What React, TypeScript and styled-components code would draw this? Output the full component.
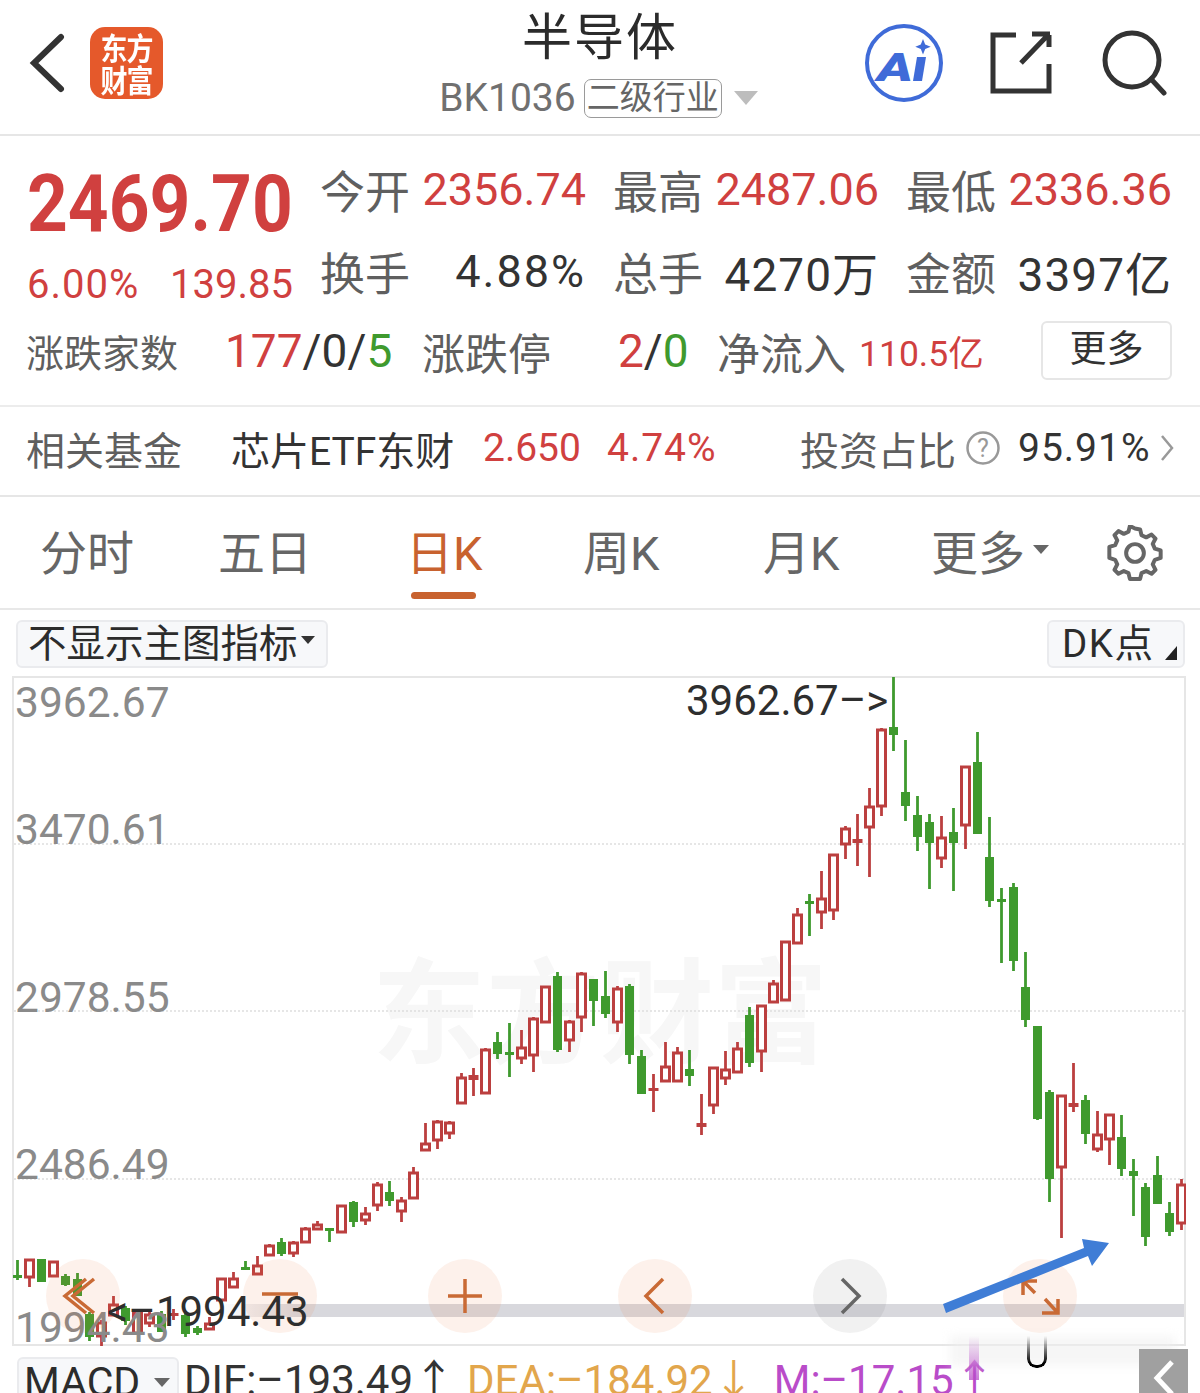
import React from "react";
import styled, { createGlobalStyle } from "styled-components";

const GlobalStyle = createGlobalStyle`
  html, body {
    margin: 0;
    padding: 0;
    background: #fff;
  }
  body {
    font-family: Roboto, "Noto Sans CJK SC", sans-serif;
    color: #333;
  }
`;

const RED = "#d0403f";
const DARK = "#333333";
const GREY = "#5f5f5f";
const ORANGE = "#c8622f";

// candles from newest (right) to oldest: high, body top, body bottom, low, up
const candles: [number, number, number, number, number][] = [
  [1180, 1185, 1225, 1231, 1], [1203, 1214, 1233, 1237, 0], [1157, 1176, 1205, 1205, 0],
  [1184, 1188, 1238, 1247, 0], [1160, 1172, 1177, 1217, 0], [1116, 1138, 1170, 1177, 0],
  [1115, 1115, 1141, 1166, 1], [1112, 1135, 1151, 1153, 1], [1096, 1101, 1135, 1145, 0],
  [1064, 1104, 1108, 1113, 1], [1096, 1096, 1169, 1239, 1], [1091, 1093, 1180, 1203, 0],
  [1027, 1027, 1120, 1121, 0], [953, 988, 1021, 1028, 0], [884, 888, 962, 972, 0],
  [889, 900, 901, 964, 0], [818, 858, 902, 908, 0], [733, 763, 835, 835, 0],
  [767, 767, 827, 850, 1], [809, 833, 844, 892, 0], [817, 838, 860, 869, 1],
  [815, 823, 844, 890, 0], [797, 816, 838, 852, 0], [741, 793, 807, 822, 0],
  [678, 728, 736, 752, 0], [729, 730, 808, 817, 1], [789, 807, 829, 878, 1],
  [815, 840, 844, 867, 1], [827, 829, 846, 860, 1], [855, 855, 912, 921, 1],
  [872, 899, 914, 930, 1], [895, 902, 902, 937, 0], [909, 915, 945, 945, 1],
  [942, 942, 1002, 1002, 1], [981, 984, 1004, 1004, 1], [1006, 1006, 1053, 1073, 1],
  [1008, 1016, 1064, 1068, 0], [1043, 1049, 1074, 1074, 1], [1052, 1070, 1080, 1086, 1],
  [1068, 1068, 1107, 1115, 1], [1095, 1124, 1128, 1136, 1], [1051, 1070, 1077, 1087, 0],
  [1048, 1053, 1083, 1083, 1], [1043, 1067, 1083, 1083, 1], [1075, 1089, 1092, 1113, 1],
  [1051, 1057, 1095, 1095, 0], [985, 987, 1056, 1065, 0], [987, 989, 1024, 1033, 1],
  [972, 997, 1015, 1019, 0], [980, 980, 1002, 1027, 0], [973, 974, 1019, 1033, 1],
  [1021, 1022, 1042, 1053, 1], [973, 977, 1051, 1053, 0], [987, 987, 1024, 1024, 1],
  [1018, 1019, 1057, 1073, 1], [1031, 1048, 1060, 1065, 1], [1024, 1053, 1054, 1078, 0],
  [1033, 1043, 1055, 1060, 0], [1049, 1050, 1095, 1095, 1], [1069, 1076, 1081, 1097, 1],
  [1074, 1078, 1105, 1105, 1], [1122, 1123, 1135, 1140, 1], [1121, 1122, 1142, 1150, 1],
  [1124, 1144, 1152, 1152, 1], [1168, 1173, 1200, 1200, 1], [1198, 1201, 1213, 1223, 1],
  [1182, 1193, 1202, 1207, 0], [1183, 1185, 1207, 1212, 1], [1208, 1214, 1222, 1226, 1],
  [1202, 1203, 1223, 1228, 0], [1206, 1206, 1234, 1234, 1], [1229, 1229, 1230, 1243, 0],
  [1222, 1225, 1231, 1231, 1], [1228, 1229, 1244, 1244, 1], [1242, 1243, 1255, 1258, 1],
  [1239, 1243, 1255, 1257, 0], [1245, 1246, 1257, 1257, 1], [1257, 1266, 1276, 1276, 1],
  [1262, 1268, 1269, 1269, 0], [1273, 1279, 1289, 1289, 1], [1279, 1279, 1302, 1306, 1],
  [1318, 1324, 1331, 1331, 1], [1327, 1329, 1334, 1336, 0], [1314, 1316, 1335, 1338, 0],
  [1310, 1314, 1316, 1321, 1], [1312, 1315, 1333, 1333, 0], [1310, 1315, 1325, 1328, 1],
  [1313, 1313, 1335, 1335, 1], [1307, 1309, 1322, 1326, 0], [1297, 1305, 1317, 1317, 1],
  [1321, 1323, 1338, 1347, 1], [1313, 1315, 1338, 1342, 0], [1274, 1280, 1297, 1297, 0],
  [1275, 1277, 1286, 1287, 0], [1262, 1262, 1278, 1278, 1], [1260, 1260, 1283, 1283, 0],
  [1260, 1260, 1279, 1288, 1], [1261, 1276, 1278, 1281, 0],
];

const Page = styled.div`
  position: relative;
  width: 1200px;
  height: 1393px;
  overflow: hidden;
  background: #fff;
`;

const Header = styled.header`
  height: 134px;
  display: grid;
  grid-template-columns: 340px 1fr 340px;
  border-bottom: 2px solid #e6e6e6;
`;

const HeaderLeft = styled.div`
  display: flex;
  align-items: center;
  gap: 24px;
  padding: 0 0 8px 28px;
`;

const Logo = styled.div`
  width: 73px;
  height: 72px;
  border-radius: 15px;
  background: #e5592b;
  color: #fff;
  display: flex;
  align-items: center;
  justify-content: center;
`;

const LogoText = styled.span`
  font: 700 27px/29px "Noto Sans CJK SC", sans-serif;
  letter-spacing: -1px;
  text-align: center;
  transform: scaleY(1.12);
`;

const HeaderCenter = styled.div`
  display: flex;
  flex-direction: column;
  align-items: center;
`;

const Title = styled.div`
  font-size: 50px;
  line-height: 50px;
  margin-top: 13px;
  color: #2b2b2b;
  letter-spacing: 2px;
`;

const CodeLine = styled.div`
  display: flex;
  align-items: center;
  height: 40px;
  margin: 15px 3px 0 0;
  color: #707070;
  font-size: 39px;
`;

const IndustryTag = styled.span`
  box-sizing: border-box;
  height: 39px;
  width: 138px;
  margin-left: 8px;
  border: 1.5px solid #9a9a9a;
  border-radius: 7px;
  font-size: 33px;
  line-height: 36px;
  color: #666;
  text-align: center;
  white-space: nowrap;
`;

const Caret = styled.span<{ $size: number; $color: string }>`
  width: 0;
  height: 0;
  border-left: ${(p) => p.$size}px solid transparent;
  border-right: ${(p) => p.$size}px solid transparent;
  border-top: ${(p) => p.$size * 1.2}px solid ${(p) => p.$color};
`;

const HeaderRight = styled.div`
  display: flex;
  align-items: center;
  justify-content: flex-end;
  gap: 46px;
  padding: 0 32px 8px 0;
`;

const Quote = styled.section`
  display: grid;
  grid-template-columns: 266px 266px 266px 266px;
  column-gap: 27px;
  grid-template-rows: 82px 82px;
  padding: 12px 0 0 27px;
`;

const PriceBlock = styled.div`
  grid-row: span 2;
`;

const BigPrice = styled.div`
  font-size: 80px;
  line-height: 80px;
  margin-top: 16px;
  font-weight: 700;
  color: ${RED};
  transform: scaleX(0.89);
  transform-origin: left center;
  white-space: nowrap;
`;

const ChangeLine = styled.div`
  display: flex;
  justify-content: space-between;
  margin-top: 19px;
  font-size: 40px;
  line-height: 44px;
  color: ${RED};
`;

const Stat = styled.div`
  display: flex;
  justify-content: space-between;
  align-items: center;
  font-size: 45px;
  height: 82px;
`;

const Label = styled.span`
  color: ${GREY};
`;

const Value = styled.span<{ $color?: string; $size?: number; $track?: number }>`
  color: ${(p) => p.$color ?? DARK};
  ${(p) => p.$size && `font-size: ${p.$size}px;`}
  ${(p) => p.$track && `letter-spacing: ${p.$track}px;`}
  white-space: nowrap;
`;

const Breadth = styled.div`
  display: grid;
  grid-template-columns: 199px 197px 196px 99px 142px 181px 132px;
  align-items: center;
  height: 77px;
  padding: 0 0 16px 26px;
  font-size: 43px;
  border-bottom: 2px solid #ececec;
`;

const SmallLabel = styled.span`
  color: ${GREY};
  font-size: 38px;
`;

const MoreButton = styled.div`
  box-sizing: border-box;
  height: 59px;
  margin-left: 1px;
  border: 2px solid #e6e6e6;
  border-radius: 6px;
  font-size: 37px;
  line-height: 53px;
  text-align: center;
  color: ${DARK};
`;

const FundRow = styled.div`
  display: grid;
  grid-template-columns: 205px 252px 124px 193px 166px 52px 141px 30px;
  align-items: center;
  height: 82px;
  padding: 0 0 6px 26px;
  font-size: 39px;
  border-bottom: 2px solid #e6e6e6;
`;

const Tabs = styled.nav`
  display: grid;
  grid-template-columns: 178px 188px 177px 180px 168px 176px 60px;
  align-items: center;
  height: 111px;
  padding-left: 40px;
  border-bottom: 2px solid #e8e8e8;
`;

const Tab = styled.div<{ $active?: boolean }>`
  position: relative;
  box-sizing: border-box;
  display: flex;
  align-items: center;
  gap: 8px;
  height: 111px;
  padding-bottom: 6px;
  font-size: 47px;
  color: ${(p) => (p.$active ? ORANGE : "#666")};
`;

const TabUnderline = styled.span`
  position: absolute;
  left: 5px;
  bottom: 9px;
  width: 65px;
  height: 7px;
  border-radius: 4px;
  background: ${ORANGE};
`;

const Toolbar = styled.div`
  display: flex;
  justify-content: space-between;
  align-items: flex-start;
  height: 56px;
  padding: 10px 15px 0 16px;
`;

const ToolButton = styled.div<{ $width: number }>`
  position: relative;
  box-sizing: border-box;
  width: ${(p) => p.$width}px;
  height: 48px;
  display: flex;
  align-items: center;
  gap: 3px;
  padding: 0 0 9px 10px;
  font-size: 38.5px;
  color: #2c2c2c;
  background: #f7f8fa;
  border: 2px solid #eaebee;
  border-radius: 6px;
  white-space: nowrap;
`;

const DkText = styled.span`
  margin-left: 3px;
  letter-spacing: 1.5px;
`;

const Corner = styled.span`
  position: absolute;
  right: 6px;
  bottom: 6px;
  width: 0;
  height: 0;
  border-left: 12px solid transparent;
  border-bottom: 14px solid #222;
`;

const Chart = styled.div`
  position: relative;
  box-sizing: border-box;
  width: 1174px;
  height: 670px;
  margin-left: 12px;
  border: 2px solid #e6e6e6;
`;

const ChartDrawing = styled.svg`
  position: absolute;
  left: -2px;
  top: -2px;
  width: 1174px;
  height: 670px;
`;

const Watermark = styled.div`
  position: absolute;
  left: 358px;
  top: 267px;
  font: 700 114px/120px "Noto Sans CJK SC", sans-serif;
  color: #f7f7f7;
  white-space: nowrap;
`;

const AxisLabel = styled.span<{ $top: number }>`
  position: absolute;
  left: 1px;
  top: ${(p) => p.$top}px;
  font-size: 42.5px;
  line-height: 48px;
  color: #8a8a8a;
`;

const Extreme = styled.span<{ $left: number; $top: number }>`
  position: absolute;
  left: ${(p) => p.$left}px;
  top: ${(p) => p.$top}px;
  font-size: 42px;
  line-height: 48px;
  color: #2e2e2e;
  white-space: nowrap;
`;

const ScrollBar = styled.div`
  position: absolute;
  left: 206px;
  right: 0;
  top: 626px;
  height: 13px;
  background: linear-gradient(to right, rgba(214, 214, 220, 0), #d8d8dd 8%);
`;

const RoundButton = styled.div<{ $left: number; $grey?: boolean }>`
  position: absolute;
  left: ${(p) => p.$left}px;
  top: 581px;
  width: 74px;
  height: 74px;
  border-radius: 50%;
  display: flex;
  align-items: center;
  justify-content: center;
  background: ${(p) => (p.$grey ? "rgba(60, 60, 60, 0.07)" : "rgba(236, 120, 60, 0.1)")};
`;

const BlueArrow = styled.svg`
  position: absolute;
  left: 926px;
  top: 560px;
  width: 190px;
  height: 90px;
`;

const Indicators = styled.div`
  display: flex;
  align-items: flex-start;
  height: 46px;
  padding: 11px 0 0 17px;
  font-size: 42px;
  line-height: 48px;
  white-space: nowrap;
`;

const MacdButton = styled.div`
  box-sizing: border-box;
  display: flex;
  align-items: center;
  gap: 14px;
  width: 162px;
  height: 60px;
  padding: 0 0 10px 5px;
  margin-right: 5px;
  background: #f7f8fa;
  border: 2px solid #eaebee;
  border-radius: 6px;
  font-size: 41px;
  color: #2c2c2c;
`;

const Reading = styled.span<{ $color: string; $gap?: number }>`
  color: ${(p) => p.$color};
  margin-right: ${(p) => p.$gap ?? 0}px;
`;

const Blur = styled.div`
  position: absolute;
  left: 950px;
  top: 1336px;
  width: 225px;
  height: 30px;
  background: rgba(238, 238, 238, 0.55);
  filter: blur(5px);
`;

const Smear = styled.div`
  position: absolute;
  left: 969px;
  top: 1336px;
  width: 10px;
  height: 44px;
  background: linear-gradient(to bottom, transparent, rgba(184, 76, 201, 0.75));
`;

const CursorMark = styled.div`
  position: absolute;
  left: 1027px;
  top: 1336px;
  box-sizing: border-box;
  width: 20px;
  height: 32px;
  border: 3px solid #000;
  border-top: none;
  border-radius: 0 0 9px 9px;
  -webkit-mask-image: linear-gradient(to bottom, transparent, #000 85%);
  mask-image: linear-gradient(to bottom, transparent, #000 85%);
`;

const CollapseTab = styled.div`
  position: absolute;
  left: 1139px;
  top: 1349px;
  width: 49px;
  height: 44px;
  background: #a0a0a0;
  display: flex;
  align-items: flex-end;
  justify-content: center;
`;

const OrangeLine = ({ d }: { d: string }) => (
  <svg width="50" height="50" viewBox="0 0 50 50" fill="none" stroke="#c96a35" strokeWidth="3.500">
    <path d={d} />
  </svg>
);

const Candles = () => (
  <g>
    {candles.map(([hi, top, bot, lo, up], k) => {
      const x = 1181.5 - 12 * k;
      const color = up ? "#bb3f3f" : "#3f9a2e";
      const thick = up ? bot - top < 6 : true;
      return (
        <g key={k} stroke={color} strokeWidth="2.8">
          {hi < top && <line x1={x} x2={x} y1={hi} y2={top} />}
          {lo > bot && <line x1={x} x2={x} y1={bot} y2={lo} />}
          {thick ? (
            <rect x={x - (up ? 5 : 4.5)} y={top} width={up ? 10 : 9} height={Math.max(bot - top, 3)} fill={color} stroke="none" />
          ) : (
            <rect x={x - 4} y={top + 1} width={8} height={bot - top - 2} fill="#fff" strokeWidth="3" />
          )}
        </g>
      );
    })}
  </g>
);

const App = () => (
  <Page>
    <GlobalStyle />
    <Header>
      <HeaderLeft>
        <svg width="38" height="60" viewBox="0 0 38 60" fill="none" stroke="#333" strokeWidth="6" strokeLinecap="round">
          <path d="M33 4 6 30l27 26" />
        </svg>
        <Logo>
          <LogoText>
            东方
            <br />
            财富
          </LogoText>
        </Logo>
      </HeaderLeft>
      <HeaderCenter>
        <Title>半导体</Title>
        <CodeLine>
          BK1036
          <IndustryTag>二级行业</IndustryTag>
          <span style={{ width: 12 }} />
          <Caret $size={12} $color="#bdbdbd" />
        </CodeLine>
      </HeaderCenter>
      <HeaderRight>
        <svg width="80" height="80" viewBox="0 0 80 80">
          <circle cx="40" cy="40" r="37" fill="none" stroke="#3f6bd8" strokeWidth="4" />
          <text x="13" y="58" fill="#3f6bd8" fontFamily="Roboto" fontWeight="900" fontStyle="italic" fontSize="38" textLength="36" lengthAdjust="spacingAndGlyphs">A</text>
          <path d="M53 34h9l-4 24h-9z" fill="#3f6bd8" />
          <path d="M59 16l2.200 5.500 5.500 2.200-5.500 2.200-2.200 5.500-2.200-5.500-5.500-2.200 5.500-2.200z" fill="#3f6bd8" />
        </svg>
        <svg width="66" height="66" viewBox="2 0 66 66" fill="none" stroke="#333" strokeWidth="5">
          <path d="M28 5H5v56h56V34M61 5v12M33 33 60 5M44 4h18" />
        </svg>
        <svg width="66" height="66" viewBox="0 0 66 66" fill="none" stroke="#333" strokeWidth="5" strokeLinecap="round">
          <circle cx="30" cy="30" r="27" />
          <path d="m49 49 13 14" />
        </svg>
      </HeaderRight>
    </Header>

    <Quote>
      <PriceBlock>
        <BigPrice>2469.70</BigPrice>
        <ChangeLine>
          <Value $color={RED} $track={1}>6.00%</Value>
          <Value $color={RED}>139.85</Value>
        </ChangeLine>
      </PriceBlock>
      <Stat>
        <Label>今开</Label>
        <Value $color={RED}>2356.74</Value>
      </Stat>
      <Stat>
        <Label>最高</Label>
        <Value $color={RED}>2487.06</Value>
      </Stat>
      <Stat>
        <Label>最低</Label>
        <Value $color={RED}>2336.36</Value>
      </Stat>
      <Stat>
        <Label>换手</Label>
        <Value $track={2}>4.88%</Value>
      </Stat>
      <Stat>
        <Label>总手</Label>
        <Value $size={46} $track={1}>4270万</Value>
      </Stat>
      <Stat>
        <Label>金额</Label>
        <Value $size={46} $track={1}>3397亿</Value>
      </Stat>
    </Quote>

    <Breadth>
      <SmallLabel>涨跌家数</SmallLabel>
      <Value $size={46}>
        <Value $color={RED}>177</Value>/0/<Value $color="#3f9a2e">5</Value>
      </Value>
      <Label>涨跌停</Label>
      <Value $size={46}>
        <Value $color={RED}>2</Value>/<Value $color="#3f9a2e">0</Value>
      </Value>
      <Label>净流入</Label>
      <Value $color={RED} $size={35.5}>110.5亿</Value>
      <MoreButton>更多</MoreButton>
    </Breadth>

    <FundRow>
      <Label>相关基金</Label>
      <Value>芯片ETF东财</Value>
      <Value $color={RED}>2.650</Value>
      <Value $color={RED} $track={1}>4.74%</Value>
      <Label>投资占比</Label>
      <svg width="34" height="34" viewBox="0 0 34 34">
        <circle cx="17" cy="17" r="15.500" fill="none" stroke="#999" strokeWidth="2.500" />
        <text x="17" y="26" textAnchor="middle" fill="#999" fontSize="25" fontFamily="Roboto">?</text>
      </svg>
      <Value $track={1}>95.91%</Value>
      <svg width="16" height="30" viewBox="0 0 16 30" fill="none" stroke="#999" strokeWidth="2.500">
        <path d="m3 3 10 12L3 27" />
      </svg>
    </FundRow>

    <Tabs>
      <Tab>分时</Tab>
      <Tab>五日</Tab>
      <Tab $active>
        日K
        <TabUnderline />
      </Tab>
      <Tab>周K</Tab>
      <Tab>月K</Tab>
      <Tab>
        更多
        <Caret $size={8} $color="#666" />
      </Tab>
      <svg width="56" height="56" viewBox="0 0 24 24" fill="none" stroke="#666" strokeWidth="1.700" strokeLinejoin="round">
        <path d="M12 1.500l2.200.4.6 2.500 2 .9 2.300-1.200 1.700 1.700-1.200 2.300.9 2 2.500.8v3.200l-2.500.8-.9 2 1.200 2.300-1.700 1.700-2.300-1.200-2 .9-.6 2.500h-4.400l-.6-2.500-2-.9-2.300 1.200-1.700-1.700 1.200-2.300-.9-2-2.500-.8V9.400l2.500-.8.9-2-1.200-2.300 1.700-1.700 2.300 1.200 2-.9.6-2.500z" />
        <circle cx="12" cy="12" r="3.800" />
      </svg>
    </Tabs>

    <Toolbar>
      <ToolButton $width={312}>
        不显示主图指标
        <Caret $size={7} $color="#333" />
      </ToolButton>
      <ToolButton $width={138}>
        <DkText>DK点</DkText>
        <Corner />
      </ToolButton>
    </Toolbar>

    <Chart>
      <Watermark>东方财富</Watermark>
      <ChartDrawing viewBox="12 677 1174 670">
        {[845, 1012, 1180].map((y) => (
          <line key={y} x1="14" x2="1184" y1={y} y2={y} stroke="#dedede" strokeWidth="1.500" strokeDasharray="2 2" />
        ))}
        <Candles />
      </ChartDrawing>
      <AxisLabel $top={1}>3962.67</AxisLabel>
      <AxisLabel $top={128}>3470.61</AxisLabel>
      <AxisLabel $top={296}>2978.55</AxisLabel>
      <AxisLabel $top={463}>2486.49</AxisLabel>
      <AxisLabel $top={626}>1994.43</AxisLabel>
      <ScrollBar />
      <RoundButton $left={32}>
        <OrangeLine d="M28 8 7 25l21 17M36 8 15 25l21 17" />
      </RoundButton>
      <RoundButton $left={229}>
        <OrangeLine d="M7 23h36" />
      </RoundButton>
      <RoundButton $left={414}>
        <OrangeLine d="M8 25h34M25 8v34" />
      </RoundButton>
      <RoundButton $left={604}>
        <OrangeLine d="M33 8 16 25l17 17" />
      </RoundButton>
      <RoundButton $left={799} $grey>
        <svg width="50" height="50" viewBox="0 0 50 50" fill="none" stroke="#666" strokeWidth="3.500">
          <path d="m17 8 17 17-17 17" />
        </svg>
      </RoundButton>
      <RoundButton $left={989}>
        <OrangeLine d="M8 24V10h14M8 10l12 12M30 28l13 14M43 28v14H27" />
      </RoundButton>
      <Extreme $left={672} $top={-1}>3962.67–&gt;</Extreme>
      <Extreme $left={93} $top={610}>&lt;–1994.43</Extreme>
      <BlueArrow viewBox="940 1239 190 90">
        <path d="m943 1305 141-56-2-9 27 4-17 23-4-10-142 57z" fill="#3f7dd6" />
      </BlueArrow>
    </Chart>

    <Indicators>
      <MacdButton>
        MACD
        <Caret $size={8} $color="#666" />
      </MacdButton>
      <Reading $color={DARK} $gap={12}>DIF:–193.49↑</Reading>
      <Reading $color="#e2a64c" $gap={19}>DEA:–184.92↓</Reading>
      <Reading $color="#b94cc9">M:–17.15↑</Reading>
    </Indicators>

    <Blur />
    <Smear />
    <CursorMark />
    <CollapseTab>
      <svg width="26" height="36" viewBox="0 0 26 36" fill="none" stroke="#fff" strokeWidth="5">
        <path d="M21 5 6 21l15 16" />
      </svg>
    </CollapseTab>
  </Page>
);

export default App;
